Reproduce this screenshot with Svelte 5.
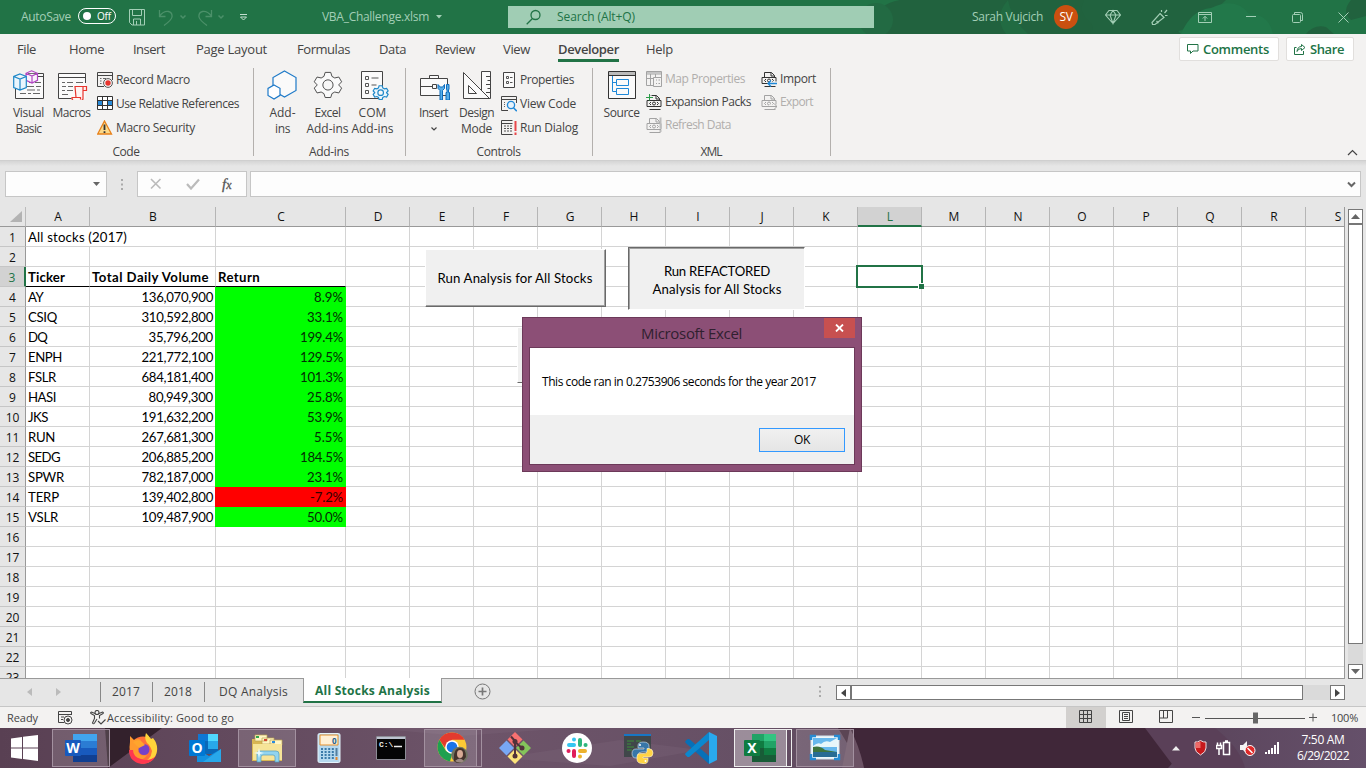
<script>
  const cols = [
    ['A', 64], ['B', 126], ['C', 130], ['D', 64], ['E', 64], ['F', 64], ['G', 64], ['H', 64], ['I', 64], ['J', 64],
    ['K', 64], ['L', 64], ['M', 64], ['N', 64], ['O', 64], ['P', 64], ['Q', 64], ['R', 64], ['S', 64]
  ];
  const blanks = cols.slice(3);
  const stocks = [
    ['AY', 15, '136,070,900', '8.9%', 29], ['CSIQ', 29, '310,592,800', '33.1%', 36], ['DQ', 19, '35,796,200', '199.4%', 43],
    ['ENPH', 34, '221,772,100', '129.5%', 43], ['FSLR', 28, '684,181,400', '101.3%', 43], ['HASI', 28, '80,949,300', '25.8%', 36],
    ['JKS', 20, '191,632,200', '53.9%', 36], ['RUN', 27, '267,681,300', '5.5%', 29], ['SEDG', 32, '206,885,200', '184.5%', 43],
    ['SPWR', 36, '782,187,000', '23.1%', 36], ['TERP', 31, '139,402,800', '-7.2%', 33], ['VSLR', 30, '109,487,900', '50.0%', 36]
  ];
  const rows = Array.from({ length: 23 }, (_, i) => i + 1);
  const menu = [
    ['File', 19, 52], ['Home', 35, 64], ['Insert', 32, 63], ['Page Layout', 71, 101], ['Formulas', 53, 82], ['Data', 27, 56],
    ['Review', 40, 68], ['View', 27, 55], ['Developer', 61, 88], ['Help', 27, 60]
  ];
  const apps = ['word', 'firefox', 'outlook', 'explorer', 'calc', 'cmd', 'chrome', 'git', 'slack', 'python', 'code', 'excel', 'photo'];
  const framed = ['word', 'explorer', 'photo'];
  const stacked = ['chrome', 'excel'];

  // Tracks a label so that it takes exactly the given number of pixels.
  function fit(node, width) {
    const natural = node.getBoundingClientRect().width;
    node.style.letterSpacing = (width - natural) / node.textContent.length + 'px';
  }
</script>

{#snippet t(text, w)}<span class="t" use:fit={w}>{text}</span>{/snippet}

{#snippet gear(color, fill)}
  <path d="M12 1.500h6l1.300 4.300 3 1.700 4.400-1 3 5.100-3.100 3.300v.2l3.100 3.300-3 5.200-4.400-1-3 1.700L18 28.500h-6l-1.300-4.200-3-1.700-4.400 1-3-5.200 3.100-3.300v-.2L.3 11.600l3-5.100 4.400 1 3-1.700z" stroke={color} {fill} />
  <circle cx="15" cy="15" r="5.500" stroke={color} fill="#f7f7f7" />
{/snippet}

{#snippet xmlDoc(c)}
  <path d="M3.500 6V1.500h7l3 3V6M10 1.500V5h3.500M1 6.500h14v6H1zM3.500 15.500h11" stroke={c} fill="none" />
  <path d="M5 8 3.500 9.500 5 11M11 8l1.500 1.500L11 11" stroke={c} fill="none" /><circle cx="8" cy="9.500" r="1.500" stroke={c} fill="none" />
{/snippet}

{#snippet small(kind)}
  <svg class="si" viewBox="0 0 16 16" fill="none">
    {#if kind === 'record'}
      <path d="M.5.5h15V8M.5.5v14H7M.5 3.500h15" stroke="#444" /><path d="M3 6.500h1.500M3 9h1.500M3 11.500h1.500M6 6.500h3" stroke="#666" />
      <circle cx="11" cy="11" r="4.400" stroke="#555" fill="#f3f2f1" /><circle cx="11" cy="11" r="2.700" fill="#e8352e" />
    {:else if kind === 'relative'}
      <path d="M.5.500h15v13H.5z" fill="#fff" /><path d="M0 5h5v5H0zM11 5h5v5h-5z" fill="#2b8bd8" /><path d="M.5.5h15v13H.5zM.5 4.500h15M.5 9.500h15M5.500.5v13M10.500.5v13" stroke="#333" />
    {:else if kind === 'warning'}
      <path d="M7.500 1 14.500 14H.7z" fill="#fbd98a" stroke="#e8811a" stroke-width="1.300" /><path d="M7.500 4.500v5.500M7.500 11.200V13" stroke="#333" stroke-width="1.800" />
    {:else if kind === 'properties'}
      <path d="M2.500.5h11v15h-11z" fill="#fafafa" stroke="#444" /><path d="M5.500 4.500h2v2h-2zM5.500 9.500h2v2h-2z" stroke="#555" /><path d="M9 5.500h2.500M9 10.500h2.500" stroke="#555" />
    {:else if kind === 'view'}
      <path d="M15.500 7V.5H.5v14H7M.5 3.500h15" stroke="#444" /><path d="M3 6.500h2M3 8.500h2M3 10.500h2" stroke="#666" stroke-dasharray="1 1" />
      <circle cx="10" cy="9" r="3.600" stroke="#1e88d8" fill="#e4f1fb" stroke-width="1.300" /><path d="m12.500 11.700 3.300 3.500" stroke="#1e88d8" stroke-width="1.500" />
    {:else if kind === 'run'}
      <path d="M11.500.5H.5v14h11M.5 3.500h11" stroke="#444" /><path d="M3 6h8M3 8.500h8M3 11h8" stroke="#555" stroke-dasharray="2 1" /><path d="M14.500 1v10M14.500 12.500V15" stroke="#e8474b" stroke-width="2" />
    {:else if kind === 'map'}
      <path d="M8 14.500H.5V.5h15V7M.5 3h15M.5 7.500h7M4.500 3v11M9.500 3v3" stroke="#a3a3a3" /><path d="M1 1h14v2H1z" fill="#c4c4c4" /><path d="M7.500 6.500h8v9h-8zM10 9h1M10 12.500h1M12.500 9h1.500M12.500 12.500h1.500" stroke="#a3a3a3" />
    {:else if kind === 'expansion'}
      {@render xmlDoc('#333')}<path d="M3 0v6M0 3h6" stroke="#f3f2f1" stroke-width="3" /><path d="M3.500 0v6.500M0 3.500h7" stroke="#2b9b48" />
    {:else if kind === 'refresh'}
      {@render xmlDoc('#a3a3a3')}<path d="M14.500.5v11M14.500 13v2" stroke="#bdbdbd" stroke-width="2" />
    {:else if kind === 'import'}
      {@render xmlDoc('#333')}<path d="M8 12.500h8" stroke="#f3f2f1" stroke-width="4" /><path d="M16 12.500H7M10 9.500l-3 3 3 3" stroke="#1e88d8" stroke-width="1.300" />
    {:else if kind === 'export'}
      {@render xmlDoc('#a3a3a3')}<path d="M8 12.500h8" stroke="#f3f2f1" stroke-width="4" /><path d="M7 12.500h9M13 9.500l3 3-3 3" stroke="#a3a3a3" />
    {/if}
  </svg>
{/snippet}

{#snippet cmd(kind, label, w, off = false)}
  <div class="cmd" class:off>{@render small(kind)}{@render t(label, w)}</div>
{/snippet}

{#snippet big(kind)}
  <svg class="bi" viewBox="0 0 32 30" fill="none">
    {#if kind === 'vb'}
      <path d="M15 3.500h15.500v25h-28V18M15 6.500h15" stroke="#444" fill="#fafafa" />
      <path d="M16 12.500h4M22 12.500h6M14 16.500h7M23 16.500h5M7 23.500h6M15 23.500h3M20 23.500h7M14 20h8M24 20h3" stroke="#666" />
      <path d="m18.500.8 6 2.500v7L19 13l-6-2.700V3.300zM13 3.300l6 2.700 5.500-2.700M19 6v7" fill="#fbf1fc" stroke="#b146c2" stroke-width="1.200" />
      <path d="m7 4 6.300 2.500v11L7 20 .7 17.500v-11zM.7 6.500 7 9l6.300-2.500M7 9v11" fill="#eaf6fd" stroke="#1e88c8" stroke-width="1.200" />
    {:else if kind === 'macros'}
      <path d="M2.500 3.500h27v25h-27z" fill="#fafafa" /><path d="M29.500 13V3.500h-27v25h13M2.500 7.500h27" stroke="#444" />
      <path d="M6 12.500h3M11 12.500h6M20 12.500h7M6 16.500h4M12 16.500h5M6 20.500h3M11 20.500h6M6 24.500h6" stroke="#666" />
      <path d="M19 16.500h11.500v4H27v8q0 2-2 2h-7.500q-1.500 0-1.500-3h4zM27 20v-3.500M20 27.500h4.500v2" fill="#fff3f2" stroke="#e8352e" stroke-width="1.200" />
    {:else if kind === 'addins'}
      <path d="m17.500 1 11.500 6.500v13L17.500 27 6 20.500v-13z" fill="#fafafa" stroke="#1e7ac8" stroke-width="1.200" /><path d="m7 15 6 3.300v7L7 29l-6-3.600v-7z" fill="#fff" stroke="#1e7ac8" stroke-width="1.200" />
    {:else if kind === 'gear'}
      <g transform="translate(2 1) scale(.93)">{@render gear('#444', '#fafafa')}</g>
    {:else if kind === 'com'}
      <path d="M4.500 1.500h21v27h-21z" fill="#fafafa" stroke="#444" /><path d="M8.500 6.500h3v3h-3zM8.500 13.500h3v3h-3zM8.500 20.500h3v3h-3zM14.500 8h7M14.500 15h5" stroke="#555" />
      <g transform="translate(16 15) scale(.51)" stroke-width="2.300">{@render gear('#1e88c8', '#e8f5fd')}</g>
    {:else if kind === 'insert'}
      <path d="M2.500 8.500h27v17h-27zM11.500 8V5.500h9V8M2.500 16.500h12M14.500 14.500h4v4h-4z" fill="#fafafa" stroke="#444" />
      <path d="M20 14.500v4l2 2v9.500h2.500v-9.500l2-2v-4L24.700 17h-2.500zM28.500 14.500H31v5h-.5v3h1v7.500h-3.500v-7.500h1v-3h-.5z" fill="#57aee8" stroke="#0f6cbd" />
    {:else if kind === 'design'}
      <path d="M20.500 1.500h9v27h-9zM25 6.500h4M26.500 10.500H29M25 14.500h4M26.500 18.500H29M25 22.500h4" fill="#fafafa" stroke="#444" />
      <path d="M2.500 2.500v26h26zM7.500 15.500v8h8z" fill="#fafafa" stroke="#444" />
    {:else if kind === 'source'}
      <path d="M2.500 1.500h27v27h-27z" fill="#fafafa" stroke="#333" /><path d="M3 2h26v3H3z" fill="#bbb" /><path d="M2.500 5.500h27" stroke="#333" />
      <path d="M6.500 6v15.500h4M6.500 12.500h4M10.500 9.500h12v6h-12zM10.500 18.500h12v6h-12z" stroke="#1e88d8" />
    {/if}
  </svg>
{/snippet}

{#snippet bigButton(kind, a, wa, b, wb)}
  <div class="big">{@render big(kind)}{@render t(a, wa)}{#if b}{@render t(b, wb)}{:else if kind === 'insert'}<svg class="chev" viewBox="0 0 8 6"><path d="m1.500 1.500 2.500 2.500L6.500 1.500" fill="none" stroke="#444" stroke-width="1.200" /></svg>{/if}</div>
{/snippet}

{#snippet app(kind)}
  <svg class="app" viewBox="0 0 32 32">
    {#if kind === 'word' || kind === 'excel'}
      {@const x = kind === 'excel'}
      <path d="M8 2h24v7H8z" fill={x ? '#21a366' : '#41a5ee'} />{#if x}<path d="M20 2h12v7H20z" fill="#33c481" />{/if}
      <path d="M8 9h24v7H8z" fill={x ? '#107c41' : '#2b7cd3'} />{#if x}<path d="M20 9h12v7H20z" fill="#21a366" />{/if}
      <path d="M8 16h24v7H8z" fill={x ? '#185c37' : '#185abd'} />{#if x}<path d="M20 16h12v7H20z" fill="#107c41" />{/if}
      <path d="M8 23h24v7H8z" fill={x ? '#185c37' : '#103f91'} />
      <rect x="0" y="8" width="16" height="16" rx="1" fill={x ? '#107c41' : '#185abd'} />
      <text x="8" y="21" text-anchor="middle" font-size="14" font-weight="700" fill="#fff">{x ? 'X' : 'W'}</text>
    {:else if kind === 'firefox'}
      <circle cx="16" cy="18" r="13.500" fill="#ff7139" /><path d="M19 1q3 3 5 6l2-1q5 6 4 13a14 14 0 0 1-17 12q11-2 12-12-2-6-5-8-3-4-1-10z" fill="#ffd43a" /><path d="M3 10V4l4 4q4-2 7 0l-3 5q-1 3 4 3l-4 3q2 6 9 4-4 7-12 3-7-6-5-16z" fill="#ff9a2e" /><path d="M2 18q0 12 13 14 9 0 14-8-7 6-15 3-8-2-8-9z" fill="#ff3850" /><circle cx="17" cy="17.500" r="5.500" fill="#7542c7" /><path d="M6 10q5-3 8-1l4 4-6 3z" fill="#ffa52d" />
    {:else if kind === 'outlook'}
      <path d="M9 2h20v20H9z" fill="#0a68b8" /><path d="M19 2h10v7H19z" fill="#50d9ff" /><path d="M9 2h10v7H9z" fill="#0f78d4" /><path d="M19 9h10v8H19z" fill="#28a8ea" /><path d="m8 17 12 7 12-7v13H8z" fill="#1490df" /><path d="M32 17 14 30h18z" fill="#28a8ea" /><rect y="8" width="16" height="16" rx="1" fill="#0078d4" /><text x="8" y="21" text-anchor="middle" font-size="14" font-weight="700" fill="#fff">O</text>
    {:else if kind === 'explorer'}
      <path d="M1 7h12l2 3h16v19H1z" fill="#d8b653" /><path d="M4 3h12v6H4zM11 6h12v6H11zM19 8h12v5H19z" fill="#fff6c4" stroke="#bda352" stroke-width=".7" /><path d="M5 4h3v2H5z" fill="#30a84c" /><path d="M13 7h3v2h-3z" fill="#d44632" /><path d="M21 9h3v2h-3z" fill="#298cdc" /><path d="M2 12h29v16H2z" fill="#f6e498" /><path d="M6 30v-8q0-3 3-3h16q3 0 3 3v8h-4v-5q0-2-2-2H12q-2 0-2 2v5z" fill="#91d4ef" stroke="#509cbd" stroke-width=".7" /><path d="m8 16 1 4 4 1-4 1-1 4-1-4-4-1 4-1z" fill="#e9fbff" />
    {:else if kind === 'calc'}
      <rect x="5" y="1.500" width="22" height="29" rx="1.500" fill="#b5d8ee" stroke="#e5f3fb" /><path d="M7 3h18v10H7z" fill="#fff0d5" stroke="#e4902e" /><text x="19" y="11.500" font-size="8" font-weight="700" fill="#24618d">0</text>
      {#each [17, 20, 23, 26] as y}<path d={`M8 ${y}h13`} stroke="#3b7aa9" stroke-width="2" stroke-dasharray="2 1.600" />{/each}<path d="M22.500 16h2v8h-2z" fill="#537fa0" /><path d="M22.500 25h2v3h-2z" fill="#e2852d" />
    {:else if kind === 'cmd'}
      <path d="M1.500 4.500h29v23h-29z" fill="#050505" stroke="#8d8d96" /><path d="M2 5h28v2H2z" fill="#bcc3d0" /><text x="4" y="15" font-size="8" font-family="Liberation Mono" font-weight="700" fill="#eee">C:\</text><path d="M19 14.500h8" stroke="#eee" stroke-width="1.500" />
    {:else if kind === 'chrome'}
      <circle cx="15" cy="15" r="14.500" fill="#fcc934" /><path d="M2.400 7.800A14.500 14.500 0 0 1 27.600 7.800H15l-7 8z" fill="#e33b2e" /><path d="M2.400 7.800 9 19l6 3-2 7.400A14.500 14.500 0 0 1 2.400 7.800z" fill="#1ea050" /><circle cx="15" cy="15" r="6.800" fill="#fff" /><circle cx="15" cy="15" r="5.300" fill="#1a73e8" />
      <circle cx="22.500" cy="23" r="8.300" fill="#6e7460" /><path d="M17 29q-1-13 6-13 6 0 6 9l-3 4q-5 4-9 0z" fill="#44332c" /><ellipse cx="23" cy="22" rx="3" ry="4" fill="#d8ab95" /><path d="M18 29q5-5 9 0-4 3-9 0" fill="#9d8982" />
    {:else if kind === 'git'}
      <path d="m16 0 7.500 7.500L16 15 8.500 7.500z" fill="#f87171" /><path d="m24.500 8.500 7.500 7.500-7.500 7.500L17 16z" fill="#84c45b" /><path d="m7.500 8.500L15 16l-7.500 7.500L0 16z" fill="#78a8f5" /><path d="M16 17l7.500 7.500L16 32l-7.500-7.500z" fill="#fbe37a" /><path d="M12 4.500 16 9v15M16 10l7 6" stroke="#51323a" stroke-width="2" fill="none" /><circle cx="16" cy="9.500" r="2.500" fill="#51323a" /><circle cx="16" cy="24" r="2.500" fill="#51323a" /><circle cx="23" cy="16" r="2.500" fill="#51323a" />
    {:else if kind === 'slack'}
      <circle cx="16" cy="16" r="15" fill="#fff" /><g fill="none" stroke-width="4" stroke-linecap="round"><path d="M8 13h5M13 7.500v.1" stroke="#36c5f0" /><path d="M19 8v5M24.500 13h.1" stroke="#2eb67d" /><path d="M19 19h5M19 24.500v.1" stroke="#ecb22e" /><path d="M13 19v5M7.500 19h.1" stroke="#e01e5a" /></g>
    {:else if kind === 'python'}
      <path d="M1 2h27v23H1z" fill="#40474a" /><path d="M1 2h27v2H1z" fill="#1776c4" /><path d="M4 9h7M4 12h4M4 15h7M4 18h5M13 9h5" stroke="#3d8f3b" />
      <path d="M20 10q-5 0-5 4v2h6v1h-8q-4 0-4 4.500t4 4.500h2v-3q0-3 4-3h5q2 0 2-2v-4q0-4-6-4z" fill="#3776a8" stroke="#dceaf2" stroke-width=".6" /><path d="M20 32q5 0 5-4v-2h-5v-1h6q4 0 4-4t-4-4.500h-2v3q0 2-3 2h-4q-3 0-3 3v3q0 4 6 4z" fill="#ffd343" stroke="#fff8d9" stroke-width=".6" /><circle cx="17" cy="13" r="1" fill="#fff" /><circle cx="22.500" cy="29" r="1" fill="#fff" />
    {:else if kind === 'code'}
      <path d="M24 24 4.500 7.300Q3 6.500 2 7.500L.5 9q-.8 1 .3 2L24 32z" fill="#0770b8" /><path d="M24 8 4.500 24.700Q3 25.500 2 24.500L.5 23q-.8-1 .3-2L24 0z" fill="#0b88cf" /><path d="M24 0 32 4v24l-8 4z" fill="#29a9ee" />
    {:else if kind === 'photo'}
      <path d="M2 4h28v23H2z" fill="#eef7fa" stroke="#d2e4ee" /><path d="M4 6h24v19H4z" fill="#67b8ed" /><path d="M4 14q5-4 8-2 4-4 9-2l7-4v9H4z" fill="#e6f6fa" /><path d="M4 15q7-2 12 3l12 2H4z" fill="#3e743e" /><path d="M4 20h24v5H4z" fill="#286c94" /><path d="M2 8V4h5M25 4h5v4M30 22v5h-5M7 27H2v-5" fill="none" stroke="#278bd2" stroke-width="2.500" />
    {/if}
  </svg>
{/snippet}

<div class="screen">
  <header class="title">
    <svg class="art" viewBox="0 0 540 34"><path d="M60 34q-12-15-5-26Q70-4 100 0h255q16 12 4 18-14 8-4 16z" fill="#21623e" /><circle cx="50" cy="20" r="17" fill="#226a43" /><path d="M258 0q-6 12 4 20 8 6 2 14h76q30-4 60-34z" fill="#21633f" /><path d="M182 0q4 20 20 34H180Q167 17 182 0" fill="#216b42" /><path d="M355 34q10-24 30-26 25-12 38 6 20 0 24 20z" fill="#22784a" /><path d="M480 34q8-10 20-7l8 7zM525 0q-10 12 0 20l15-4V0z" fill="#21623e" /></svg>
    <span class="pale">{@render t('AutoSave', 50)}</span>
    <span class="toggle"><i></i>{@render t('Off', 14)}</span>
    <svg width="16" height="17" viewBox="0 0 16 17" fill="none" stroke="#a3cfb6"><path d="M.5.5h15v15.500H3L.5 13.500zM3.500.5v6h9v-6M4.500 16v-6h7v6M7.500 12v4" /></svg>
    <svg width="16" height="17" viewBox="0 0 16 17" fill="none" stroke="#4b9069" stroke-width="1.300"><path d="M1.500 1v6.500h6M1.500 7Q6 1.500 10.500 2.500q4 1 3.500 5.500-.5 3-8 8.500" /></svg>
    <svg width="8" height="6" viewBox="0 0 8 6" fill="none" stroke="#4b9069" stroke-width="1.500"><path d="M1.500 1.500 4 4l2.500-2.500" /></svg>
    <svg width="16" height="17" viewBox="0 0 16 17" fill="none" stroke="#4b9069" stroke-width="1.300"><path d="M13.500 1v6.500h-6M13.500 7Q9 1.500 4.500 2.500 .5 3.500 1 8q.5 3 8 8.500" /></svg>
    <svg width="8" height="6" viewBox="0 0 8 6" fill="none" stroke="#4b9069" stroke-width="1.500"><path d="M1.500 1.500 4 4l2.500-2.500" /></svg>
    <svg width="9" height="8" viewBox="0 0 9 8"><path d="M1 1.500h7" stroke="#c5dfd0" /><path d="m1.500 4 3 3 3-3z" fill="none" stroke="#c5dfd0" /></svg>
    <span class="pale up">{@render t('VBA_Challenge.xlsm', 107)}</span>
    <svg width="7" height="4" viewBox="0 0 7 4"><path d="M0 0h6L3 3.500z" fill="#a3cfb6" /></svg>
    <div class="search"><svg width="16" height="16" viewBox="0 0 16 16" fill="none" stroke="#217346" stroke-width="1.300"><circle cx="9.500" cy="6" r="4.500" /><path d="M6.500 9.500.7 15.300" /></svg>{@render t('Search (Alt+Q)', 78)}</div>
    <span class="pale low">{@render t('Sarah Vujcich', 71)}</span>
    <span class="avatar">{@render t('SV', 13)}</span>
    <svg width="16" height="16" viewBox="0 0 16 16" fill="none" stroke="#a3cfb6" stroke-width="1.100"><path d="M4 1.500h8l3.500 4.500L8 14.500.5 6zM.5 6h15M8 1.500 5 6l3 8.500L11 6z" /></svg>
    <svg width="17" height="17" viewBox="0 0 17 17" fill="none" stroke="#a3cfb6" stroke-width="1.200"><path d="M9 4.500 13 8.500 4 15.500H1.500l-.5-2zM5.500 12l2 2M10.500 1v2M13.500 4l2.500-3M14 6.500h2.500" /></svg>
    <svg width="14" height="11" viewBox="0 0 14 11" fill="none" stroke="#a3cfb6"><path d="M.5.5h13v10H.5zM.5 2.500h13M7 9V4.500M4.800 6.500 7 4.300l2.200 2.200" /></svg>
    <svg width="10" height="3" viewBox="0 0 10 3"><path d="M0 .5h10" stroke="#a3cfb6" /></svg>
    <svg width="11" height="11" viewBox="0 0 11 11" fill="none" stroke="#a3cfb6"><rect x=".5" y="2.500" width="8" height="8" rx="1" /><path d="M2.500 2V.5h6q2 0 2 2v6H9" /></svg>
    <svg width="11" height="11" viewBox="0 0 11 11" fill="none" stroke="#a3cfb6"><path d="m.5.5 10 10M10.500.5l-10 10" /></svg>
  </header>

  <nav class="menu">
    {#each menu as [label, w, track]}
      <div class="item" style:width="{track}px" class:active={label === 'Developer'}>{@render t(label, w)}</div>
    {/each}
    <div class="actions">
      <div class="action"><svg width="12" height="11" viewBox="0 0 12 11" fill="none" stroke="#217346"><path d="M.5.5h10.500V7H6L3.500 9.500V7h-3z" /></svg>{@render t('Comments', 66)}</div>
      <div class="action"><svg width="12" height="12" viewBox="0 0 12 12" fill="none" stroke="#217346"><path d="M2.500 4.500h-2v7h9V8M7.500 1.500 11 4.500l-3.500 3V5.500Q4 5.500 3 8.500q.5-5 4.500-5z" /></svg>{@render t('Share', 34)}</div>
    </div>
  </nav>

  <section class="ribbon">
    <div class="group g1">
      <div class="body"><div class="bigs">{@render bigButton('vb', 'Visual', 31, 'Basic', 26)}{@render bigButton('macros', 'Macros', 38)}</div>
        <div class="list">{@render cmd('record', 'Record Macro', 74)}{@render cmd('relative', 'Use Relative References', 123)}{@render cmd('warning', 'Macro Security', 79)}</div></div>
      <footer>{@render t('Code', 27)}</footer>
    </div>
    <div class="group g2">
      <div class="body"><div class="bigs">{@render bigButton('addins', 'Add-', 26, 'ins', 15)}{@render bigButton('gear', 'Excel', 26, 'Add-ins', 42)}{@render bigButton('com', 'COM', 28, 'Add-ins', 42)}</div></div>
      <footer>{@render t('Add-ins', 40)}</footer>
    </div>
    <div class="group g3">
      <div class="body"><div class="bigs">{@render bigButton('insert', 'Insert', 29)}{@render bigButton('design', 'Design', 35, 'Mode', 31)}</div>
        <div class="list">{@render cmd('properties', 'Properties', 54)}{@render cmd('view', 'View Code', 56)}{@render cmd('run', 'Run Dialog', 58)}</div></div>
      <footer>{@render t('Controls', 44)}</footer>
    </div>
    <div class="group g4">
      <div class="body"><div class="bigs">{@render bigButton('source', 'Source', 36)}</div>
        <div class="list tight">{@render cmd('map', 'Map Properties', 80, true)}{@render cmd('expansion', 'Expansion Packs', 86)}{@render cmd('refresh', 'Refresh Data', 66, true)}</div>
        <div class="list tight">{@render cmd('import', 'Import', 36)}{@render cmd('export', 'Export', 33, true)}</div></div>
      <footer>{@render t('XML', 21)}</footer>
    </div>
    <svg class="collapse" width="11" height="7" viewBox="0 0 11 7" fill="none" stroke="#444" stroke-width="1.200"><path d="m1 6 4.500-4.500L10 6" /></svg>
  </section>

  <section class="formula">
    <div class="box name"><svg width="8" height="5" viewBox="0 0 8 5"><path d="M0 0h7L3.500 4z" fill="#666" /></svg></div>
    <svg class="dots" width="2" height="11" viewBox="0 0 2 11"><path d="M0 0h2v2H0zM0 4.500h2v2H0zM0 9h2v2H0z" fill="#aaa" /></svg>
    <div class="box fx"><svg width="12" height="12" viewBox="0 0 12 12"><path d="m1 1 9.500 9.500M10.500 1 1 10.500" stroke="#bbb" stroke-width="1.600" /></svg><svg width="14" height="12" viewBox="0 0 14 12"><path d="m1 6 4 4.500L13 1.500" fill="none" stroke="#bbb" stroke-width="2.200" /></svg><em>f<small>x</small></em></div>
    <div class="box input"><svg width="9" height="7" viewBox="0 0 9 7"><path d="m1 1.500 3.500 3.500L8 1.500" fill="none" stroke="#666" stroke-width="2" /></svg></div>
  </section>

  <section class="work">
    <div class="sheet">
      <div class="head"><div class="corner"><svg width="13" height="12" viewBox="0 0 13 12"><path d="M12 0v11H0z" fill="#b3b3b3" /></svg></div>
        {#each cols as [c, w]}<div class="col" class:on={c === 'L'} style:width="{w}px">{c}</div>{/each}</div>
      {#each rows as r}
        {@const s = r > 3 ? stocks[r - 4] : null}
        <div class="row">
          <div class="num" class:on={r === 3}>{r}</div>
          {#if r === 1}<div class="cell wide">{@render t('All stocks (2017)', 99)}</div><div class="cell c"></div>
          {:else if r === 3}<div class="cell a hd">{@render t('Ticker', 37)}</div><div class="cell b hd">{@render t('Total Daily Volume', 117)}</div><div class="cell c hd">{@render t('Return', 42)}</div>
          {:else if s}<div class="cell a">{@render t(s[0], s[1])}</div><div class="cell b r">{@render t(s[2], s[2].length === 11 ? 71.5 : 64.5)}</div><div class="cell c r green" class:red={s[0] === 'TERP'}>{@render t(s[3], s[4])}</div>
          {:else}<div class="cell a"></div><div class="cell b"></div><div class="cell c"></div>{/if}
          {#each blanks as _}<div class="cell"></div>{/each}
        </div>
      {/each}
      <button class="ax one">{@render t('Run Analysis for All Stocks', 155)}</button>
      <button class="ax two">{@render t('Run REFACTORED', 106)}{@render t('Analysis for All Stocks', 129)}</button>
      <div class="ax three"></div>
      <div class="cursor"><i></i></div>
    </div>
    <div class="vscroll">
      <div class="sb"><svg width="9" height="6" viewBox="0 0 9 6"><path d="M4.500 0 9 5H0z" fill="#666" /></svg></div><div class="thumb"></div><div class="gap"></div>
      <div class="sb"><svg width="9" height="6" viewBox="0 0 9 6"><path d="M0 0h9L4.500 5z" fill="#666" /></svg></div>
    </div>
  </section>

  <section class="sheets">
    <div class="arrows"><svg width="5" height="8" viewBox="0 0 5 8"><path d="M5 0v8L0 4z" fill="#bbb" /></svg><svg width="5" height="8" viewBox="0 0 5 8"><path d="M0 0v8l5-4z" fill="#bbb" /></svg></div>
    <div class="tab">{@render t('2017', 28)}</div><div class="tab">{@render t('2018', 28)}</div><div class="tab dq">{@render t('DQ Analysis', 69)}</div>
    <div class="tab now">{@render t('All Stocks Analysis', 115)}</div>
    <svg class="plus" width="17" height="17" viewBox="0 0 17 17" fill="none" stroke="#777"><circle cx="8.500" cy="8.500" r="7.500" /><path d="M8.500 4.500v8M4.500 8.500h8" stroke-width="1.700" /></svg>
    <svg class="grip" width="2" height="11" viewBox="0 0 2 11"><path d="M0 0h2v2H0zM0 4.500h2v2H0zM0 9h2v2H0z" fill="#aaa" /></svg>
    <div class="hscroll"><div class="sb"><svg width="5" height="8" viewBox="0 0 5 8"><path d="M5 0v8L0 4z" fill="#444" /></svg></div><div class="bar"></div><div class="rest"></div><div class="sb"><svg width="5" height="8" viewBox="0 0 5 8"><path d="M0 0v8l5-4z" fill="#444" /></svg></div></div>
  </section>

  <section class="status">
    {@render t('Ready', 31)}
    <svg class="rec" width="15" height="14" viewBox="0 0 15 14" fill="none" stroke="#444"><path d="M6 11.500H.5V.5h13V4M.5 3.500h13M3 6h3M3 8.500h2" /><circle cx="10" cy="9" r="4" fill="#f3f2f1" /><circle cx="10" cy="9" r="1.500" fill="#444" /></svg>
    <svg class="acc" width="16" height="15" viewBox="0 0 16 15" fill="none" stroke="#444" stroke-width="1.100"><circle cx="7" cy="2.500" r="2" /><path d="M5 3.500 1.500 2q-1.500.5-.5 1.500l3.500 2v3L2.500 13q1 1.500 2 0L7 9M9 3.500 12.500 2q1.500.5.5 1.500l-3.500 2v3M8 11l3 3 4.500-4.500" /></svg>
    {@render t('Accessibility: Good to go', 127)}
    <div class="views"><div class="on"><svg width="13" height="13" viewBox="0 0 13 13" fill="none" stroke="#444"><path d="M.5.5h12v12H.5zM4.500.5v12M8.500.5v12M.5 4.500h12M.5 8.500h12" /></svg></div>
      <div><svg width="14" height="13" viewBox="0 0 14 13" fill="none" stroke="#444"><path d="M.5.5h13v12H.5zM3.500 2.500h7v8h-7zM5 4.500h4M5 6.500h4M5 8.500h4" /></svg></div>
      <div><svg width="14" height="13" viewBox="0 0 14 13" fill="none" stroke="#444"><path d="M.5.5h13v12H.5zM.5 8h8V.5M4.500.5V8" /></svg></div></div>
    <div class="zoom"><svg width="125" height="14" viewBox="0 0 125 14"><path d="M0 6.500h8M117 6.500h8M121 2.500v8M13 7.500h100" stroke="#555" /><path d="M61 1.500h5v11h-5z" fill="#666" /></svg></div>
    <span class="pct">{@render t('100%', 27)}</span>
  </section>

  <footer class="taskbar">
    <svg class="wall" viewBox="0 0 1366 40" preserveAspectRatio="none"><path d="M108 40 162 0H105z" fill="#33212c" /><path d="M370 0 460 8 570 0zM500 30l120-18 80 10-90 16z" fill="#7b6378" opacity=".35" /><path d="M838 0h330q20 20 0 40H862z" fill="#402739" /><path d="M850 0q10 20 14 40h-22z" fill="#6c5365" /><path d="M1145 0h70q25 20 30 40h-70z" fill="#5a4058" /></svg>
    <div class="start"><svg width="27" height="26" viewBox="0 0 27 26"><path d="m0 3.500 11-1.500v10.500H0zM12 1.800 27 0v12.500H12zM0 13.500h11V24L0 22.500zM12 13.500h15V26l-15-2z" fill="#fff" /></svg></div>
    {#each apps as a}<div class="slot" class:framed={framed.includes(a)} class:stacked={stacked.includes(a)} class:current={a === 'excel'}>{@render app(a)}</div>{/each}
    <div class="tray">
      <svg width="8" height="5" viewBox="0 0 8 5"><path d="M4 0 8 4.500H0z" fill="#eee" /></svg>
      <svg width="13" height="16" viewBox="0 0 13 16"><path d="M6.500.5q3 2 5.500 1.500v6q0 4-5.500 7Q1 12 1 8V2q2.500.5 5.500-1.500z" fill="#c7191c" stroke="#eadce0" /><path d="M6.500 1.500Q4 3 2 2.500V8h4.500z" fill="#ee6a67" /></svg>
      <svg width="15" height="16" viewBox="0 0 15 16" fill="none" stroke="#fff" stroke-width="1.500"><path d="M7.500 2.500h6v12h-6zM9 1h3M.5 5.500h5v3h-5zM1.500 2.500v3M4.500 2.500v3M3 9v6" /></svg>
      <svg width="16" height="16" viewBox="0 0 16 16"><path d="M0 5h3l4-4v13l-4-4H0z" fill="#f5f5f5" /><circle cx="10" cy="10.500" r="5" fill="#df2929" stroke="#fff" /><path d="m7.500 8 5 5" stroke="#fff" stroke-width="1.500" /></svg>
      <svg width="17" height="13" viewBox="0 0 17 13"><path d="M0 10h2v2H0zM3 8h2v4H3zM6 6h2v6H6zM9 3h2v9H9zM12 0h2v12h-2z" fill="#fff" /></svg>
      <div class="clock">{@render t('7:50 AM', 43)}{@render t('6/29/2022', 52)}</div>
    </div>
  </footer>

  <div class="dialog">
    <div class="dtitle">{@render t('Microsoft Excel', 101)}<div class="x"><svg width="9" height="8" viewBox="0 0 9 8"><path d="m1 .5 7 7M8 .5l-7 7" stroke="#fff" stroke-width="1.800" /></svg></div></div>
    <div class="panel"><div class="msg">{@render t('This code ran in 0.2753906 seconds for the year 2017', 274)}</div><div class="bottom"><button class="ok">{@render t('OK', 16)}</button></div></div>
  </div>
</div>

<style>
  :global(body) { margin: 0; overflow: hidden; }
  .screen { position: relative; width: 1366px; height: 768px; overflow: hidden; display: flex; flex-direction: column; background: #e6e6e6; color: #444; font: 12px/16px "Open Sans", "Noto Sans", sans-serif; }
  .screen * { box-sizing: border-box; }
  svg { display: block; flex: none; }
  .t { white-space: pre; display: inline-block; flex: none; }
  button { font: inherit; color: inherit; margin: 0; padding: 0; }

  .title { position: relative; height: 34px; background: #217346; display: grid; grid-template-columns: 57px 51px 29px 21px 19px 19px 22px 83px 114px 72px 464px 82px 51px 46px 47px 48px 46px 46px 28px; align-items: center; padding-left: 21px; }
  .title > * { position: relative; }
  .title .art { position: absolute; left: 826px; top: 0; width: 540px; height: 34px; }
  .pale { color: #a3cfb6; }
  .toggle { width: 38px; height: 16px; top: -1px; border: 1px solid #fff; border-radius: 8px; color: #fff; font-size: 10px; display: flex; align-items: center; gap: 6px; padding-left: 4px; }
  .toggle i { width: 8px; height: 8px; border-radius: 50%; background: #fff; }
  .search { width: 366px; height: 22px; background: #a0cdb4; color: #217346; display: flex; align-items: center; gap: 15px; padding-left: 18px; }
  .avatar { width: 24px; height: 24px; border-radius: 50%; background: #ca5010; color: #fff; display: flex; justify-content: center; align-items: center; }

  .menu { height: 31px; background: #f3f2f1; display: flex; padding-left: 17px; font-size: 13px; flex: none; }
  .item { padding-top: 8px; margin-top: -1px; flex: none; }
  .item.active { font-weight: 600; }
  .item.active .t { height: 21px; border-bottom: 3px solid #217346; }
  .actions { margin-left: auto; display: flex; gap: 7px; padding: 3px 12px 0 0; }
  .action { height: 24px; background: #fff; border: 1px solid #e1dfdd; border-radius: 2px; display: flex; align-items: center; gap: 4px; padding: 0 9px 0 7px; font-weight: 600; color: #217346; }

  .ribbon { position: relative; height: 95px; background: #f3f2f1; display: flex; flex: none; }
  .group { padding-top: 4px; position: relative; display: flex; flex-direction: column; flex: none; }
  .group::after { content: ""; position: absolute; right: 0; top: 3px; width: 1px; height: 88px; background: #b3b0ad; }
  .g1 { width: 254px; } .g2 { width: 152px; } .g3 { width: 187px; } .g4 { width: 238px; }
  .body { display: flex; height: 75px; flex: none; }
  .group footer { display: flex; justify-content: center; padding-right: 2px; }
  .bigs { display: flex; flex: none; }
  .big { display: flex; flex-direction: column; align-items: center; width: 43px; flex: none; }
  .g1 .bigs { padding-left: 7px; width: 97px; }
  .g2 .bigs { padding-left: 6px; }
  .g2 .big { width: 45px; }
  .g3 .bigs { padding-left: 6px; width: 95px; }
  .g4 .bigs { padding-left: 7px; width: 53px; }
  .bi { width: 32px; height: 30px; margin-bottom: 5px; margin-top: 1px; }
  .chev { width: 8px; height: 6px; margin-top: 5px; }
  .list { display: flex; flex-direction: column; padding-top: 2px; flex: none; }
  .cmd { height: 24.300px; display: flex; align-items: center; gap: 3px; padding-bottom: 7px; }
  .tight { width: 115px; padding-top: 1px; }
  .tight .cmd { height: 23px; padding-bottom: 5px; }
  .si { width: 16px; height: 16px; }
  .off { color: #b0aeac; }
  .collapse { position: absolute; right: 8px; bottom: 4px; }

  .formula { height: 47px; border-top: 1px solid #cfcfcf; background: linear-gradient(#d5d5d5, #e6e6e6 5px); display: flex; padding: 10px 5px 0; flex: none; }
  .box { height: 26px; border: 1px solid #c6c6c6; background: #fdfdfd; display: flex; align-items: center; flex: none; }
  .name { width: 102px; justify-content: flex-end; padding-right: 5px; }
  .dots { margin: 8px 14px 0 14px; }
  .fx { width: 110px; padding-left: 12px; gap: 24px; }
  .fx em { font: italic 15px/16px "Liberation Serif", serif; color: #555; margin-left: -2px; -webkit-text-stroke: .3px #555; }
  .fx small { font-size: 12px; }
  .input { width: 1111px; margin-left: 3px; justify-content: flex-end; padding-right: 4px; }

  .work { height: 472px; display: flex; flex: none; overflow: hidden; }
  .sheet { position: relative; width: 1345px; height: 472px; overflow: hidden; background: #fff; border-right: 1px solid #999; border-bottom: 1px solid #999; flex: none; }
  .head, .row { display: flex; width: max-content; }
  .head { height: 20px; background: #e6e6e6; color: #111; }
  .corner { width: 26px; border-right: 1px solid #bbb; border-bottom: 1px solid #999; padding: 4px 0 0 10px; }
  .col { border-right: 1px solid #b5b5b5; border-bottom: 1px solid #999; text-align: center; line-height: 19px; padding-left: 1px; flex: none; }
  .col.on { background: #d2d2d2; color: #217346; border-bottom: 2px solid #217346; }
  .row { height: 20px; font: 13.200px/20px Lato, sans-serif; color: #000; }
  .num { width: 26px; background: #e6e6e6; border-right: 1px solid #999; border-bottom: 1px solid #c6c6c6; text-align: center; line-height: 21px; font-family: "Open Sans", sans-serif; font-size: 12px; color: #111; }
  .num.on { background: #d2d2d2; color: #217346; border-right: 2px solid #217346; }
  .cell { width: 64px; height: 20px; border-right: 1px solid #d4d4d4; border-bottom: 1px solid #d4d4d4; padding: 0 2px; flex: none; }
  .wide { width: 190px; } .b { width: 126px; } .c { width: 130px; }
  .hd { font-weight: 700; border-bottom-color: #000; }
  .r { text-align: right; }
  .green { background: #0f0; border-color: #0f0; width: 131px; margin-left: -1px; color: #042b04; }
  .red { background: #f00; border-color: #f00; color: #300; }
  .ax { position: absolute; background: #f0f0f0; border: 0; font: 13.200px/18px Lato, sans-serif; color: #000; display: flex; flex-direction: column; align-items: center; justify-content: center; }
  .one { left: 425px; top: 42px; width: 181px; height: 58px; border: 1px solid #fff; border-right: 1px solid #696969; border-bottom: 1px solid #696969; box-shadow: inset -1px -1px #a0a0a0; padding-right: 1px; }
  .two { left: 628px; top: 40px; width: 177px; height: 63px; padding: 2px 0 0 1px; border: 1px solid #fff; border-left: 1px solid #696969; border-top: 1px solid #696969; box-shadow: inset 1px 1px #a0a0a0; }
  .three { left: 517px; top: 120px; width: 60px; height: 56px; border: 1px solid #fff; border-bottom: 1px solid #696969; }
  .cursor { position: absolute; left: 856px; top: 58px; width: 67px; height: 23px; border: 2px solid #217346; }
  .cursor i { position: absolute; right: -3px; bottom: -3px; width: 6px; height: 6px; background: #217346; border: solid #fff; border-width: 1px 0 0 1px; }
  .vscroll { width: 21px; padding: 2px 3px 0; background: #e6e6e6; display: flex; flex-direction: column; }
  .sb { width: 15px; height: 15px; flex: none; background: #fff; border: 1px solid #777; display: flex; align-items: center; justify-content: center; }
  .thumb { height: 420px; background: #fff; border: 1px solid #777; }
  .gap { height: 20px; background: #dadada; }

  .sheets { height: 27px; display: flex; flex: none; font-size: 12px; align-items: flex-start; }
  .arrows { width: 100px; height: 26px; display: flex; align-items: center; gap: 24px; padding-left: 27px; }
  .tab { width: 52px; height: 20px; margin-top: 3px; border-left: 1px solid #888; display: flex; align-items: center; justify-content: center; padding-right: 1px; }
  .tab.dq { width: 99px; }
  .tab.now { width: 139px; height: 25px; margin-top: -1px; padding: 3px 0 0; background: #fff; border: 1px solid #999; border-top: 0; border-bottom: 2px solid #217346; color: #217346; font-weight: 700; z-index: 1; }
  .plus { margin: 4px 0 0 32px; }
  .grip { margin: 7px 15px 0 328px; }
  .hscroll { display: flex; margin-top: 6px; width: 509px; }
  .bar { width: 452px; height: 15px; border: 1px solid #777; background: #fff; }
  .rest { width: 27px; height: 15px; background: #dadada; }

  .status { height: 22px; border-top: 1px solid #c6c6c6; background: #f3f2f1; display: flex; align-items: center; padding-left: 7px; font-size: 11px; flex: none; }
  .rec { margin: 0 17px 0 20px; } .acc { margin-right: 1px; }
  .views { display: flex; margin-left: auto; height: 21px; }
  .views div { width: 40px; display: flex; align-items: center; justify-content: center; padding: 0 1px 2px 0; }
  .views .on { background: #d2d0ce; }
  .zoom { margin-left: 6px; }
  .pct { width: 49px; padding-left: 14px; }

  .taskbar { position: relative; height: 40px; background: linear-gradient(90deg, #594053, #6d5469 35%, #665065 55%, #604a5f 61%, #513a4e 75%, #65506a); display: flex; flex: none; }
  .taskbar > * { position: relative; }
  .taskbar .wall { position: absolute; width: 1366px; height: 40px; left: 0; top: 0; }
  .start { width: 50px; padding: 7px 0 0 11px; }
  .slot { width: 62px; display: flex; align-items: center; justify-content: center; flex: none; }
  .app { width: 32px; height: 32px; position: relative; }
  .framed::before, .stacked::before { content: ""; position: absolute; inset: 1px 2px; border: 1px solid #a391a0; background: rgba(255, 255, 255, .14); }
  .stacked::before { right: 7px; }
  .stacked::after { content: ""; position: absolute; right: 2px; top: 1px; bottom: 1px; width: 4px; border: 1px solid #a391a0; border-left: 0; }
  .current::before { border-color: #eee; background: rgba(255, 255, 255, .35); }
  .current::after { border-color: #eee; }
  .current .app { left: -3px; }
  .tray { margin-left: auto; display: flex; align-items: center; color: #fff; padding-right: 13px; gap: 9px; }
  .tray svg:first-child { margin-right: 5px; }
  .clock { display: flex; flex-direction: column; align-items: center; width: 60px; margin-left: 2px; }

  .dialog { position: absolute; left: 522px; top: 317px; width: 340px; height: 155px; background: #8c4f76; border: 1px solid #6c3959; }
  .dtitle { height: 29px; display: flex; justify-content: center; position: relative; font-size: 15px; line-height: 30px; color: #302030; padding-right: 1px; }
  .x { position: absolute; right: 6px; top: 0; width: 31px; height: 20px; background: #c75050; display: flex; align-items: center; justify-content: center; }
  .panel { width: 326px; height: 118px; margin-left: 6px; border: 1px solid #6c3959; background: #f0f0f0; color: #000; font-size: 12px; }
  .msg { height: 67px; background: #fff; padding: 26px 0 0 12px; }
  .bottom { display: flex; justify-content: flex-end; padding: 13px 9px 0 0; }
  .ok { width: 86px; height: 24px; border: 1px solid #3399ff; background: linear-gradient(#f0f0f0, #e5e5e5); display: flex; align-items: center; justify-content: center; }
</style>
